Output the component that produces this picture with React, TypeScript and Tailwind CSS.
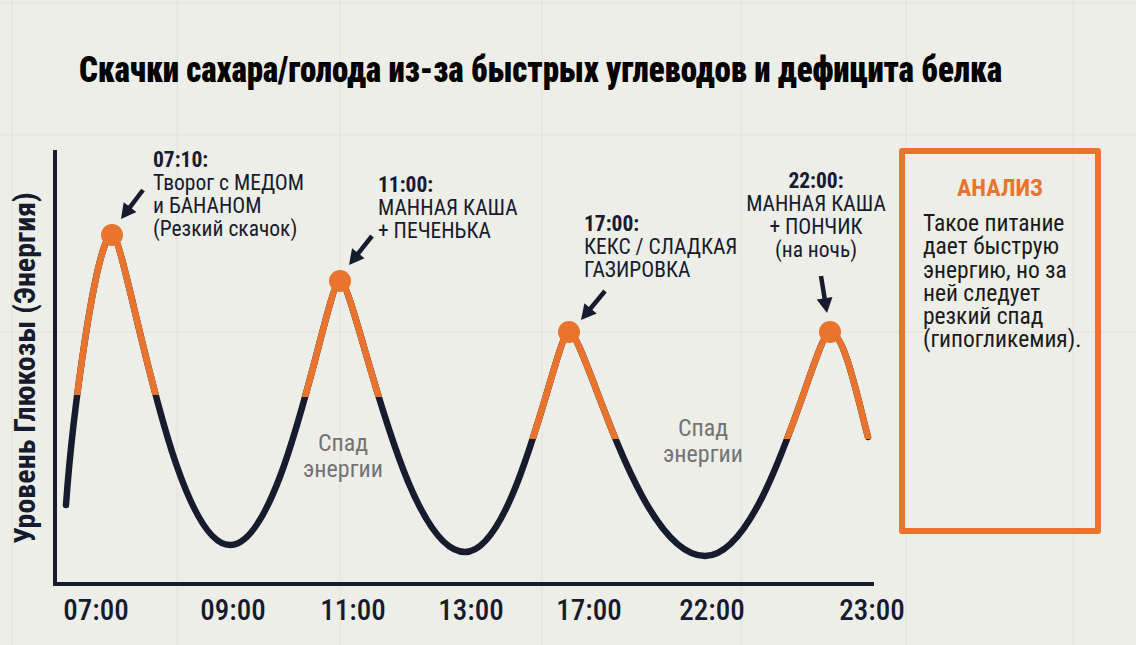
import React from "react";

const NAVY = "#161b2e";
const ORANGE = "#e8742e";

// glucose curve: peaks are sharp, troughs round
const CURVE =
  "M66,505 C72,420 96,235 112,235" +
  " C126.2,235 171,545 230,545" +
  " C285,545 326.8,281 340,281" +
  " C355,281 402.5,552 465,552" +
  " C517,552 556.5,332 569,332" +
  " C585.3,332 637,556 705,556" +
  " C767.5,556 815,332 830,332" +
  " C844.4,332 858,400 868,437";

const peaks = [
  [112, 235],
  [340, 281],
  [569, 332],
  [830, 332],
];

const arrows = [
  [143, 190, 121, 219],
  [372, 236, 349, 265],
  [605, 291, 581, 320],
  [821, 276, 827, 313],
];

function Arrow({ x1, y1, x2, y2 }: { x1: number; y1: number; x2: number; y2: number }) {
  const len = Math.hypot(x2 - x1, y2 - y1);
  const ux = (x2 - x1) / len;
  const uy = (y2 - y1) / len;
  const bx = x2 - ux * 15;
  const by = y2 - uy * 15;
  const head = `${x2},${y2} ${bx - uy * 8},${by + ux * 8} ${bx + uy * 8},${by - ux * 8}`;
  return (
    <g>
      <line x1={x1} y1={y1} x2={bx + ux * 2} y2={by + uy * 2} stroke={NAVY} strokeWidth={4.5} />
      <polygon points={head} fill={NAVY} />
    </g>
  );
}

const xLabels = [
  ["07:00", "left-[56px]"],
  ["09:00", "left-[193px]"],
  ["11:00", "left-[313px]"],
  ["13:00", "left-[431px]"],
  ["17:00", "left-[549px]"],
  ["22:00", "left-[672px]"],
  ["23:00", "left-[832px]"],
];

export default function App() {
  return (
    <div className="relative w-[1136px] h-[645px] overflow-hidden bg-[#eeeee8] font-['Roboto',sans-serif] font-stretch-condensed text-[#161b2e]">
      {/* faint background grid */}
      <svg className="absolute inset-0 pointer-events-none" width="1136" height="645">
        {[12, 177, 340, 542, 741, 906, 1073].map((x) => (
          <line key={x} x1={x} y1={0} x2={x} y2={645} stroke="#e2e2da" strokeWidth={1} />
        ))}
        {[3, 135, 332].map((y) => (
          <line key={y} x1={0} y1={y} x2={1136} y2={y} stroke="#e2e2da" strokeWidth={1} />
        ))}
      </svg>

      <div className="relative h-[140px] flex items-center pl-[79px] pb-[1px]">
        <h1 className="text-[33px] leading-none font-black tracking-[-0.15px] scale-y-110 whitespace-nowrap text-black">
          Скачки сахара/голода из-за быстрых углеводов и дефицита белка
        </h1>
      </div>

      <div className="relative flex">
        <div className="relative w-[895px] h-[505px] shrink-0">
          <svg className="absolute inset-0" width="895" height="505" viewBox="0 140 895 505">
            <defs>
              <clipPath id="hi">
                <rect x="0" y="0" width="240" height="395" />
                <rect x="240" y="0" width="230" height="397" />
                <rect x="470" y="0" width="430" height="439" />
              </clipPath>
            </defs>
            <line x1={55} y1={150} x2={55} y2={586} stroke={NAVY} strokeWidth={4} />
            <line x1={53} y1={584} x2={874} y2={584} stroke={NAVY} strokeWidth={4} />
            <path d={CURVE} fill="none" stroke={NAVY} strokeWidth={6.5} strokeLinecap="round" />
            <path d={CURVE} fill="none" stroke={ORANGE} strokeWidth={6.5} strokeLinecap="round" clipPath="url(#hi)" />
            {peaks.map(([x, y]) => (
              <circle key={x} cx={x} cy={y} r={11} fill={ORANGE} />
            ))}
            {arrows.map(([x1, y1, x2, y2]) => (
              <Arrow key={x1} x1={x1} y1={y1} x2={x2} y2={y2} />
            ))}
          </svg>

          {/* y axis title */}
          <div className="absolute left-[-175px] top-[211px] w-[400px] h-[34px] -rotate-90 text-center text-[30px] leading-[34px] font-bold text-[#161b2e] whitespace-nowrap">
            Уровень Глюкозы (Энергия)
          </div>

          {/* annotations */}
          <div className="absolute left-[153px] top-[8px] text-[21.5px] leading-[23px] text-[#161b2e] whitespace-nowrap">
            <div className="font-bold">07:10:</div>
            <div>Творог с МЕДОМ</div>
            <div>и БАНАНОМ</div>
            <div>(Резкий скачок)</div>
          </div>
          <div className="absolute left-[378px] top-[33px] text-[21.5px] leading-[23px] text-[#161b2e] whitespace-nowrap">
            <div className="font-bold">11:00:</div>
            <div>МАННАЯ КАША</div>
            <div>+ ПЕЧЕНЬКА</div>
          </div>
          <div className="absolute left-[584px] top-[72px] text-[21.5px] leading-[23px] text-[#161b2e] whitespace-nowrap">
            <div className="font-bold">17:00:</div>
            <div>КЕКС / СЛАДКАЯ</div>
            <div>ГАЗИРОВКА</div>
          </div>
          <div className="absolute left-[736px] top-[29px] w-[160px] text-center text-[21.5px] leading-[23px] text-[#161b2e] whitespace-nowrap">
            <div className="font-bold">22:00:</div>
            <div>МАННАЯ КАША</div>
            <div>+ ПОНЧИК</div>
            <div>(на ночь)</div>
          </div>

          <div className="absolute left-[293px] top-[290px] w-[100px] text-center text-[24px] leading-[26px] text-[#737373]">
            <div>Спад</div>
            <div>энергии</div>
          </div>
          <div className="absolute left-[653px] top-[275px] w-[100px] text-center text-[24px] leading-[26px] text-[#737373]">
            <div>Спад</div>
            <div>энергии</div>
          </div>

          {xLabels.map(([t, cls]) => (
            <div key={t} className={`absolute top-[454px] w-[80px] text-center text-[29px] leading-[32px] font-medium text-[#161b2e] ${cls}`}>
              {t}
            </div>
          ))}
        </div>

        <aside className="ml-[4px] mt-[8px] w-[202px] h-[386px] border-[6px] border-[#e8742e] rounded-[3px] px-[18px] pt-[20px]">
          <h2 className="text-center text-[24px] leading-[28px] font-bold text-[#e8742e]">АНАЛИЗ</h2>
          <p className="mt-[10px] text-[23.5px] leading-[23.3px] text-[#1a1a1a]">
            Такое питание дает быструю энергию, но за ней следует резкий спад (гипогликемия).
          </p>
        </aside>
      </div>
    </div>
  );
}
